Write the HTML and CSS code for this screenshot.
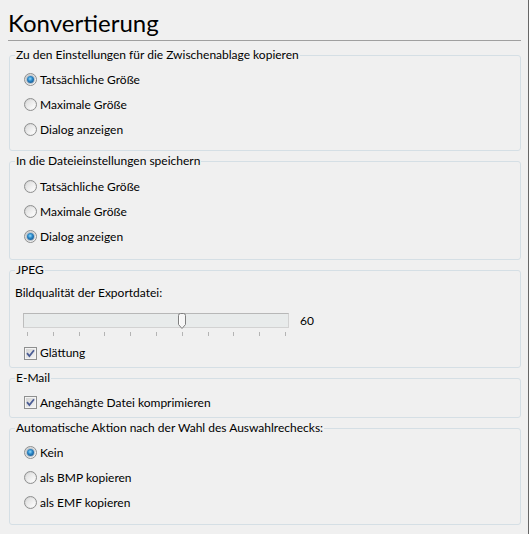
FILE: index.html
```html
<!DOCTYPE html>
<html lang="de">
<head>
<meta charset="utf-8">
<title>Konvertierung</title>
<link rel="stylesheet" href="styles.css">
</head>
<body>
<div class="page">
  <h1 class="title">Konvertierung</h1>
  <div class="rule"></div>
  <div class="groups">
    <fieldset class="group g1">
      <legend>Zu den Einstellungen für die Zwischenablage kopieren</legend>
      <label class="opt"><span class="radio on"></span>Tatsächliche Größe</label>
      <label class="opt"><span class="radio"></span>Maximale Größe</label>
      <label class="opt"><span class="radio"></span>Dialog anzeigen</label>
    </fieldset>
    <fieldset class="group g2">
      <legend>In die Dateieinstellungen speichern</legend>
      <label class="opt"><span class="radio"></span>Tatsächliche Größe</label>
      <label class="opt"><span class="radio"></span>Maximale Größe</label>
      <label class="opt"><span class="radio on"></span>Dialog anzeigen</label>
    </fieldset>
    <fieldset class="group g3">
      <legend>JPEG</legend>
      <div class="field-label">Bildqualität der Exportdatei:</div>
      <div class="slider-row" style="--value:60">
        <div class="track">
          <svg class="thumb" viewBox="0 0 8 16" width="8" height="16"><path d="M0.5 2.5 Q0.5 0.5 2.5 0.5 H5.5 Q7.5 0.5 7.5 2.5 V11.5 L4 15.5 L0.5 11.5 Z" fill="#f6f6f6" stroke="#7f7f7f"/><path d="M1.5 3 V11" stroke="#ffffff"/></svg>
        </div>
        <span class="value">60</span>
      </div>
      <div class="ticks"><i></i><i></i><i></i><i></i><i></i><i></i><i></i><i></i><i></i><i></i><i></i></div>
      <label class="opt chk-row"><span class="cb"><svg viewBox="0 0 9 9" width="9" height="9"><path d="M1 4.2 L3.4 7 L8 1.2" stroke="#4b5d95" stroke-width="1.8" fill="none"/></svg></span>Glättung</label>
    </fieldset>
    <fieldset class="group g4">
      <legend>E-Mail</legend>
      <label class="opt"><span class="cb"><svg viewBox="0 0 9 9" width="9" height="9"><path d="M1 4.2 L3.4 7 L8 1.2" stroke="#4b5d95" stroke-width="1.8" fill="none"/></svg></span>Angehängte Datei komprimieren</label>
    </fieldset>
    <fieldset class="group g5">
      <legend>Automatische Aktion nach der Wahl des Auswahlrechecks:</legend>
      <label class="opt"><span class="radio on"></span>Kein</label>
      <label class="opt"><span class="radio"></span>als BMP kopieren</label>
      <label class="opt"><span class="radio"></span>als EMF kopieren</label>
    </fieldset>
  </div>
</div>
</body>
</html>
```

FILE: styles.css
```css
* { box-sizing: border-box; }
html, body { margin: 0; padding: 0; }
body {
  background: #f0f0f0;
  font-family: Lato, "Open Sans", sans-serif;
  font-size: 12px;
  line-height: 16px;
  color: #000;
}
.page {
  width: 529px;
  height: 534px;
  border-right: 1px solid #666;
  background: #f0f0f0;
  overflow: hidden;
}
.title {
  margin: 0;
  padding: 8px 0 0 8px;
  font-size: 24px;
  line-height: 29px;
  font-weight: 400;
}
.rule {
  margin: 3px 0 0 8px;
  width: 513px;
  height: 1px;
  background: #a0a0a0;
}
.groups {
  margin-top: 6px;
  padding-left: 9px;
  display: flex;
  flex-direction: column;
  gap: 2px;
}
.group {
  margin: 0;
  width: 512px;
  min-width: 0;
  border: 1px solid #d5dfe5;
  border-radius: 3px;
  padding: 4px 0 8px 0;
}
.group legend {
  margin-left: 5px;
  padding: 0 1px;
  line-height: 16px;
}
.g2 { padding: 5px 0 10px 0; }
.g3 { padding: 7px 0 4px 0; }
.g4 { padding: 4px 0 2px 0; }
.g5 { padding: 4px 0 9px 0; }

.opt {
  display: flex;
  align-items: center;
  height: 25px;
  gap: 3px;
  margin-left: 14px;
}
.radio {
  flex: none;
  width: 13px;
  height: 13px;
  border-radius: 50%;
  border: 1px solid #8e8f8f;
  background: linear-gradient(135deg, #cfcfcf, #fbfbfb);
  display: flex;
  align-items: center;
  justify-content: center;
}
.radio::before {
  content: "";
  width: 9px;
  height: 9px;
  border-radius: 50%;
  background: linear-gradient(135deg, #dcdcdc, #ffffff);
}
.radio.on::before {
  width: 7px;
  height: 7px;
  background: radial-gradient(circle at 45% 40%, #8fdcff 0, #2a86c6 40%, #0f4175 100%);
  box-shadow: 0 0 0 1px #b9c3cb;
}
.cb {
  flex: none;
  width: 13px;
  height: 13px;
  border: 1px solid #8e8f8f;
  background: linear-gradient(135deg, #d0d0d0, #f7f7f7);
  box-shadow: inset 0 0 0 1px #f4f4f4;
  display: flex;
  align-items: center;
  justify-content: center;
}
.cb svg { display: block; }

.field-label {
  line-height: 16px;
  margin-left: 5px;
}
.slider-row {
  display: flex;
  align-items: center;
  margin: 12px 0 0 13px;
  height: 15px;
}
.track {
  position: relative;
  width: 266px;
  height: 15px;
  border: 1px solid #d2d2d2;
  border-top-color: #b7b7b7;
  border-left-color: #bdbdbd;
  background: #e8ebeb;
}
.thumb {
  position: absolute;
  top: -1px;
  left: calc(258px * var(--value) / 100 - 1px);
  display: block;
}
.value { margin-left: 11px; }
.ticks {
  display: flex;
  justify-content: space-between;
  width: 259px;
  height: 4px;
  margin: 4px 0 0 17px;
}
.ticks i {
  width: 1px;
  height: 4px;
  background: #b4b4b4;
}
.chk-row {
  height: 20px;
  margin: 7px 0 0 14px;
}
```
